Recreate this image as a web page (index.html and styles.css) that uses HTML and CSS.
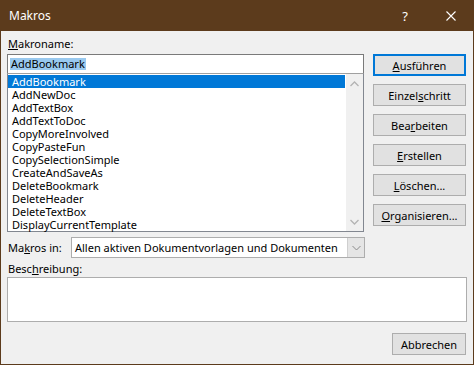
FILE: index.html
```html
<!DOCTYPE html>
<html lang="de">
<head>
    <meta charset="UTF-8">
    <title>Makros</title>
    <link rel="stylesheet" href="styles.css">
</head>
<body>

<div class="window">
    <div class="titlebar">
        <span class="title">Makros</span>
        <span class="help">?</span>
        <span class="close">
            <svg width="10" height="10" viewBox="0 0 10 10"><path d="M0.5 0.5 L9.5 9.5 M9.5 0.5 L0.5 9.5" stroke="#fff" stroke-width="1.1"/></svg>
        </span>
    </div>

    <div class="content">
        <div class="main">
            <div class="left">
                <div class="label"><u>M</u>akroname:</div>
                <div class="namebox"><span class="sel">AddBookmark</span></div>
                <div class="list">
                    <div class="items" id="items"></div>
                    <div class="scrollbar">
                        <svg width="9" height="6" viewBox="0 0 9 6"><path d="M0.5 5 L4.5 1 L8.5 5" fill="none" stroke="#b4b4b4" stroke-width="1.3"/></svg>
                        <svg width="9" height="6" viewBox="0 0 9 6"><path d="M0.5 1 L4.5 5 L8.5 1" fill="none" stroke="#b4b4b4" stroke-width="1.3"/></svg>
                    </div>
                </div>
            </div>
            <div class="buttons">
                <button class="btn default"><u>A</u>usführen</button>
                <button class="btn">Einzel<u>s</u>chritt</button>
                <button class="btn">Bea<u>r</u>beiten</button>
                <button class="btn"><u>E</u>rstellen</button>
                <button class="btn"><u>L</u>öschen...</button>
                <button class="btn"><u>O</u>rganisieren...</button>
            </div>
        </div>

        <div class="inrow">
            <span class="label">Ma<u>k</u>ros in:</span>
            <div class="select">
                <span class="value">Allen aktiven Dokumentvorlagen und Dokumenten</span>
                <span class="drop">
                    <svg width="9" height="6" viewBox="0 0 9 6"><path d="M0.5 1 L4.5 5 L8.5 1" fill="none" stroke="#8a8a8a" stroke-width="1"/></svg>
                </span>
            </div>
        </div>

        <div class="label desc-label">Besc<u>h</u>reibung:</div>
        <div class="desc"></div>

        <div class="footer">
            <button class="btn cancel">Abbrechen</button>
        </div>
    </div>
</div>

<script>
    const macros = [
        "AddBookmark", "AddNewDoc", "AddTextBox", "AddTextToDoc",
        "CopyMoreInvolved", "CopyPasteFun", "CopySelectionSimple",
        "CreateAndSaveAs", "DeleteBookmark", "DeleteHeader",
        "DeleteTextBox", "DisplayCurrentTemplate"
    ];
    const items = document.getElementById("items");
    macros.forEach((name, i) => {
        const row = document.createElement("div");
        row.classList.add("item");
        if (i === 0) row.classList.add("active");
        row.innerText = name;
        items.appendChild(row);
    });
</script>

</body>
</html>
```

FILE: styles.css
```css
body {
    margin: 0;
    font-family: "Noto Sans", Arial, sans-serif;
    font-size: 11px;
    color: #000;
    background: #fff;
}

.window {
    width: 474px;
    height: 365px;
    box-sizing: border-box;
    border: 1px solid #5c3b1c;
    border-top: none;
    background: #f0f0f0;
}

.titlebar {
    height: 31px;
    background: #5c3b1c;
    color: #fff;
    display: flex;
    align-items: center;
    padding-left: 9px;
    margin: 0 -1px;
}

.title {
    flex: 1;
    font-size: 12px;
}

.help {
    font-size: 13px;
    width: 46px;
    text-align: center;
}

.close {
    width: 46px;
    display: flex;
    justify-content: center;
}

.content {
    padding: 5px 6px 0 6px;
}

.label {
    line-height: 16px;
    padding-left: 1px;
}

.main {
    display: flex;
    gap: 9px;
}

.left {
    width: 357px;
}

.namebox {
    margin-top: 2px;
    height: 20px;
    box-sizing: border-box;
    border: 1px solid #7a7a7a;
    background: #fff;
    padding: 3px 0 0 2px;
    line-height: 12px;
}

.sel {
    background: #99c9ef;
    padding: 0 1px;
    display: inline-block;
    height: 12px;
}

.list {
    height: 159px;
    box-sizing: border-box;
    border: 1px solid #828790;
    border-top-color: #a0a0a0;
    background: #fff;
    display: flex;
    margin-top: -1px;
}

.items {
    flex: 1;
    padding-top: 1px;
}

.item {
    height: 13px;
    line-height: 13px;
    padding-left: 4px;
    margin-right: 1px;
    white-space: nowrap;
}

.item.active {
    background: #0078d7;
    color: #fff;
}

.scrollbar {
    width: 17px;
    background: #f0f0f0;
    display: flex;
    flex-direction: column;
    justify-content: space-between;
    align-items: center;
    padding: 7px 0 6px;
}

.buttons {
    width: 93px;
    padding-top: 18px;
    display: flex;
    flex-direction: column;
    gap: 8px;
}

.btn {
    height: 22px;
    font-family: "Noto Sans", Arial, sans-serif;
    font-size: 11px;
    color: #000;
    background: #e1e1e1;
    border: 1px solid #adadad;
    padding: 0;
    margin: 0;
}

.btn.default {
    border: 2px solid #0078d7;
}

.inrow {
    display: flex;
    align-items: center;
    margin-top: 5px;
    height: 21px;
}

.inrow .label {
    width: 63px;
}

.select {
    width: 294px;
    height: 21px;
    box-sizing: border-box;
    border: 1px solid #adadad;
    background: #fff;
    display: flex;
    align-items: center;
}

.value {
    flex: 1;
    padding-left: 3px;
    white-space: nowrap;
    overflow: hidden;
}

.drop {
    width: 16px;
    height: 19px;
    background: #e5e5e5;
    border-left: 1px solid #cfcfcf;
    display: flex;
    align-items: center;
    justify-content: center;
}

.desc-label {
    margin-top: 3px;
}

.desc {
    height: 45px;
    box-sizing: border-box;
    border: 1px solid #adadad;
    background: #fff;
}

.footer {
    display: flex;
    justify-content: flex-end;
    margin-top: 11px;
    padding-right: 1px;
}

.btn.cancel {
    width: 74px;
}
```
